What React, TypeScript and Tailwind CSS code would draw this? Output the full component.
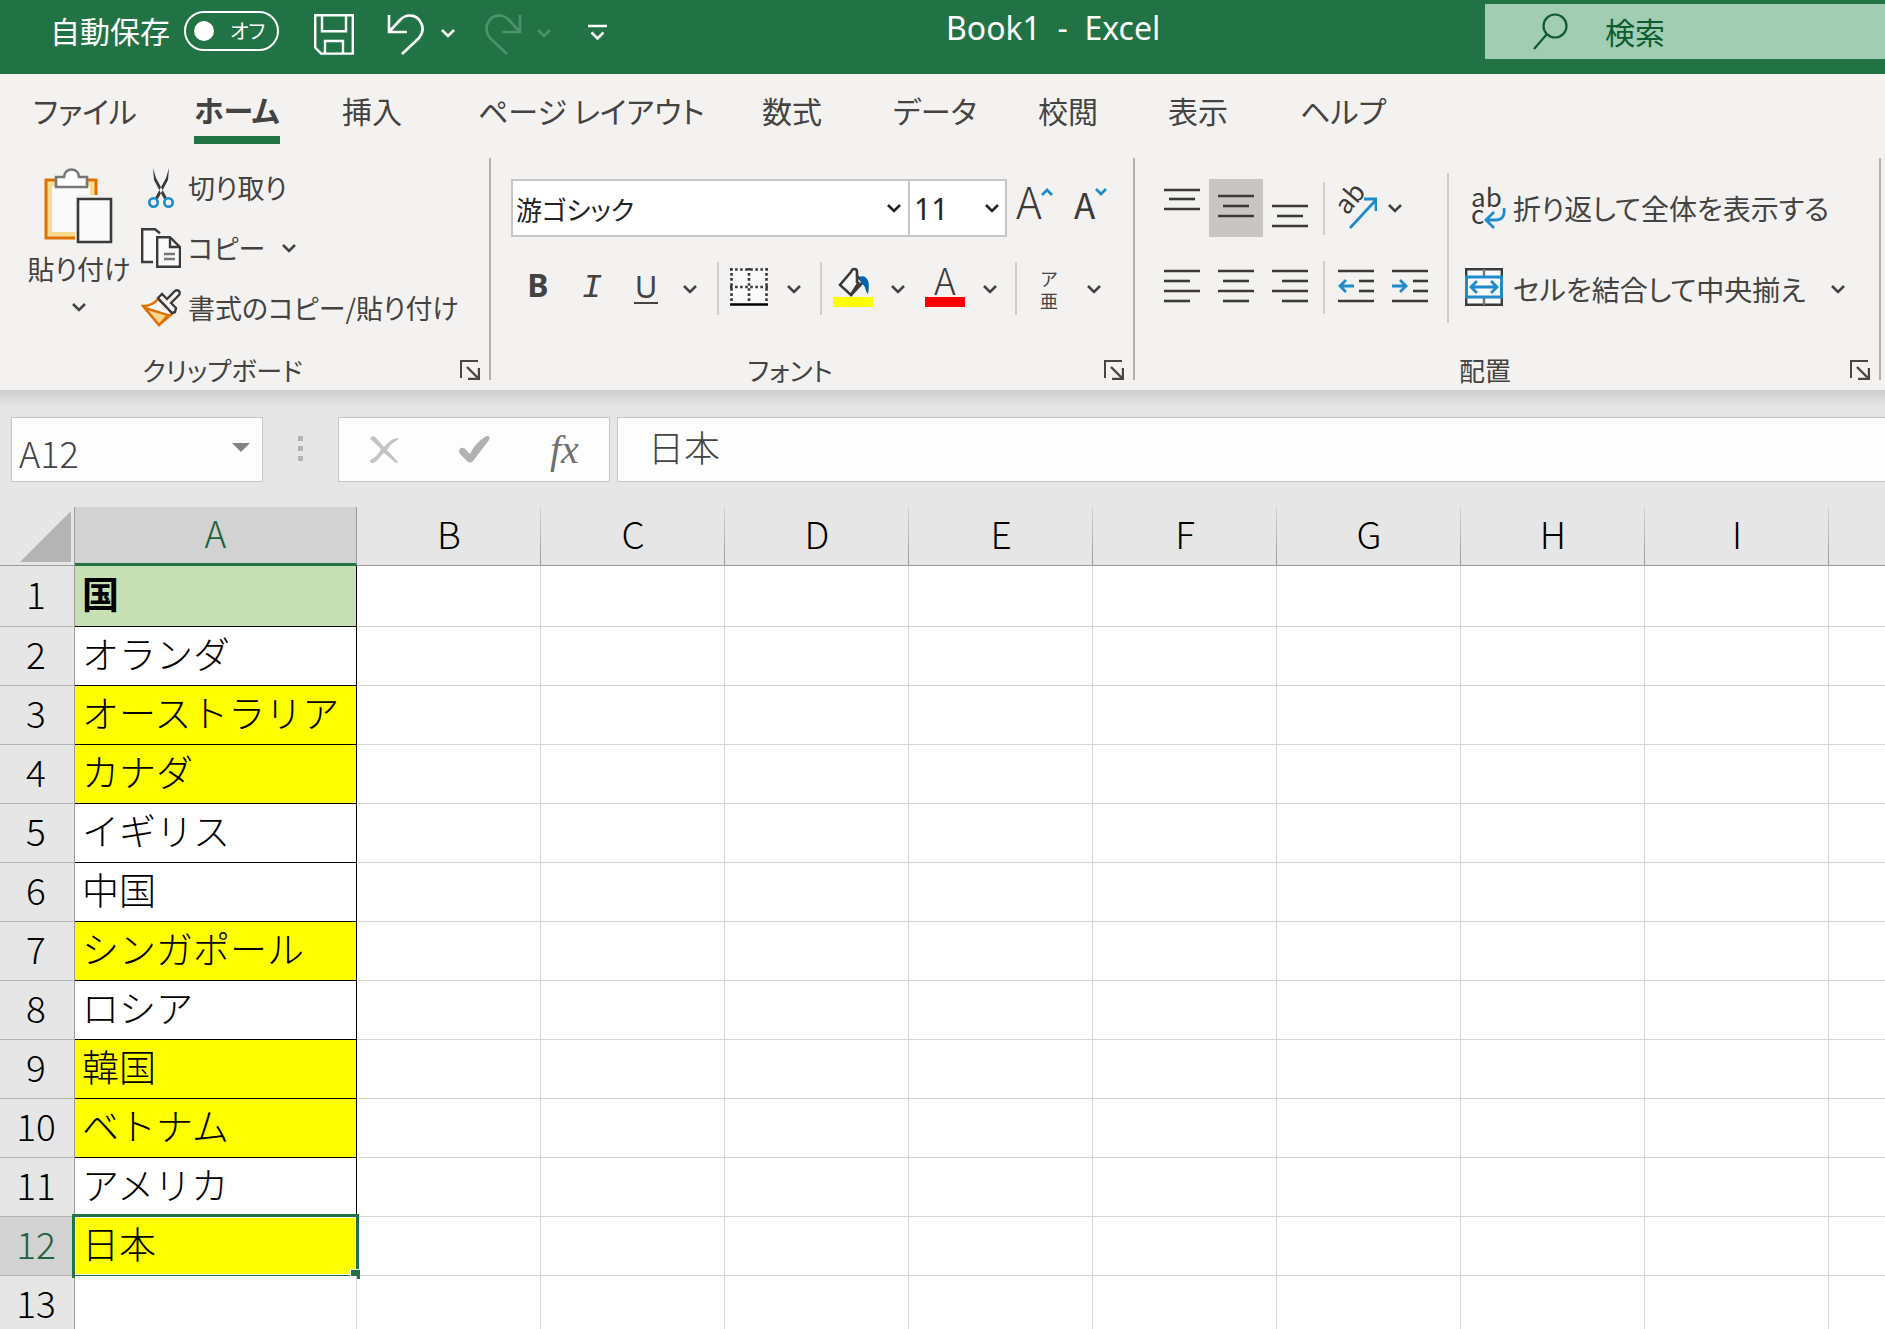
import type { ReactNode } from "react";
import clsx from "clsx";

const tabs = [
  { name: "ファイル", width: "w-[161px]" },
  { name: "ホーム", width: "w-[148px]", active: true },
  { name: "挿入", width: "w-[136px]" },
  { name: "ページ レイアウト", width: "w-[284px]" },
  { name: "数式", width: "w-[131px]" },
  { name: "データ", width: "w-[145px]" },
  { name: "校閲", width: "w-[130px]" },
  { name: "表示", width: "w-[132px]" },
  { name: "ヘルプ", width: "w-[100px]" },
];

const columns = ["A", "B", "C", "D", "E", "F", "G", "H", "I", ""];

const rows = [
  { value: "国", fill: "bg-[#c6e0b4] font-bold" },
  { value: "オランダ", fill: "bg-white" },
  { value: "オーストラリア", fill: "bg-[#ffff00]" },
  { value: "カナダ", fill: "bg-[#ffff00]" },
  { value: "イギリス", fill: "bg-white" },
  { value: "中国", fill: "bg-white" },
  { value: "シンガポール", fill: "bg-[#ffff00]" },
  { value: "ロシア", fill: "bg-white" },
  { value: "韓国", fill: "bg-[#ffff00]" },
  { value: "ベトナム", fill: "bg-[#ffff00]" },
  { value: "アメリカ", fill: "bg-white" },
  { value: "日本", fill: "bg-[#ffff00]", selected: true },
  { value: "", fill: "bg-white" },
];

function Chevron({ className }: { className?: string }) {
  return (
    <svg width="16" height="10" viewBox="0 0 16 10" className={clsx("shrink-0", className)}>
      <path d="M2 2l6 6 6-6" fill="none" stroke="currentColor" strokeWidth="2.6" />
    </svg>
  );
}

function Separator() {
  return <div className="h-[53px] w-[2px] shrink-0 bg-[#d0cecc]" />;
}

// Horizontal bars given as [x1, x2, y]
function Bars({ bars, children }: { bars: number[][]; children?: ReactNode }) {
  return (
    <svg width="36" height="40" viewBox="0 0 36 40">
      {bars.map(([x1, x2, y]) => (
        <path key={y} d={`M${x1} ${y}H${x2}`} stroke="#3b3a39" strokeWidth="2.6" />
      ))}
      {children}
    </svg>
  );
}

function Group({
  label,
  className,
  children,
}: {
  label: string;
  className: string;
  children: ReactNode;
}) {
  return (
    <section className={clsx("flex h-[222px] flex-col border-r-2 border-[#b3b0ad]", className)}>
      <div className="flex flex-1">{children}</div>
      <div className="flex h-5 items-center">
        <span className="flex-1 text-center text-[26px] leading-5">{label}</span>
        <button aria-label={label + "の設定"} className="mr-[9px] ml-[15px]">
          <svg width="20" height="20" viewBox="0 0 20 20" fill="none" stroke="#484644" strokeWidth="2">
            <path d="M1 18V1h17" />
            <path d="M7 7l11 11" strokeWidth="2.4" />
            <path d="M19 8v11H8" strokeWidth="2.4" />
          </svg>
        </button>
      </div>
    </section>
  );
}

function TitleBar() {
  return (
    <header className="flex h-[74px] shrink-0 items-start bg-[#217346] text-white">
      <div className="flex h-[61px] flex-1 items-center pl-[50px]">
        <span className="w-[134px] text-[30px]">自動保存</span>
        <button
          role="switch"
          aria-checked="false"
          aria-label="自動保存"
          className="flex h-10 w-[95px] items-center rounded-full border-2 border-white pl-2"
        >
          <span className="h-5 w-5 rounded-full bg-white" />
          <span className="pl-4 text-[20px]">オフ</span>
        </button>
        <button aria-label="上書き保存" className="mt-2 ml-[35px]">
          <svg width="40" height="41" viewBox="0 0 40 41" fill="none" stroke="white" strokeWidth="2.4">
            <path d="M1.2 1.2h37.6v38.4H7l-5.8-6z" />
            <path d="M8 1.2v16h24v-16M11 39.5V27h18v12.5" />
          </svg>
        </button>
        <button aria-label="元に戻す" className="mt-2 ml-[33px]">
          <svg width="38" height="42" viewBox="0 0 38 42" fill="none" stroke="white" strokeWidth="2.6">
            <path d="M2 1v17h18M2.5 17.5L13 6C20-1 29 1 33 7c4 6 3 12-1 17L15 40" />
          </svg>
        </button>
        <button aria-label="元に戻す一覧" className="mt-1 ml-[15px]">
          <Chevron />
        </button>
        <button aria-label="やり直し" className="mt-2 ml-7 text-[#4d9269]">
          <svg width="38" height="42" viewBox="0 0 38 42" fill="none" stroke="currentColor" strokeWidth="2.6">
            <path d="M36 1v17H18M35.500 17.500L25 6C18-1 9 1 5 7c-4 6-3 12 1 17l17 16" />
          </svg>
        </button>
        <button aria-label="やり直し一覧" className="mt-1 ml-[14px] text-[#4d9269]">
          <Chevron />
        </button>
        <button aria-label="クイック アクセス" className="mt-1 ml-9">
          <svg width="19" height="18" viewBox="0 0 19 18" fill="none" stroke="white" strokeWidth="2.6">
            <path d="M0 2h19M3.500 8.500l6 6 6-6" />
          </svg>
        </button>
      </div>
      <h1 className="w-[539px] pt-[6px] font-['Noto_Sans',sans-serif] text-[32px] leading-[44px] whitespace-pre">
        Book1  -  Excel
      </h1>
      <label className="mt-1 flex h-[55px] w-[400px] items-center bg-[#a0cdb4] pl-12 text-[#0e5c2f]">
        <svg width="36" height="38" viewBox="0 0 36 38" fill="none" stroke="currentColor" strokeWidth="2.2">
          <circle cx="22" cy="13" r="11.5" />
          <path d="M14 21L1 36" />
        </svg>
        <input
          type="search"
          aria-label="検索"
          placeholder="検索"
          className="ml-9 w-60 bg-transparent text-[30px] outline-none placeholder:text-[#0e5c2f]"
        />
      </label>
    </header>
  );
}

function Tabs() {
  return (
    <nav className="flex h-[84px] shrink-0 pl-[33px] text-[30px]">
      {tabs.map((tab) => (
        <div key={tab.name} className={clsx("shrink-0", tab.width)}>
          <button
            className={clsx(
              "h-[70px] whitespace-nowrap",
              tab.active ? "border-b-8 border-[#217346] pt-2 font-bold" : "pt-[2px]",
            )}
          >
            {tab.name}
          </button>
        </div>
      ))}
    </nav>
  );
}

function ClipboardGroup() {
  return (
    <Group label="クリップボード" className="w-[491px] shrink-0">
      <button className="flex w-[141px] flex-col items-center pt-[10px] pl-[17px]">
        <svg width="70" height="76" viewBox="0 0 70 76" className="shrink-0">
          <path d="M2 12h50v58H2z" fill="#f9db8f" stroke="#e07000" strokeWidth="3" />
          <path d="M8 18h38v46H8z" fill="#fafafa" />
          <path d="M31 27h39v49H31z" fill="#f3f2f1" />
          <path d="M12 9h8c0-10 15-10 15 0h8v10H12z" fill="#fff" stroke="#797775" strokeWidth="2.6" />
          <path d="M34 31h33v43H34z" fill="#fafafa" stroke="#3b3a39" strokeWidth="2.6" />
        </svg>
        <span className="mt-1 text-[27px] leading-[42px] whitespace-nowrap">貼り付け</span>
        <Chevron className="mt-3" />
      </button>
      <div className="flex flex-col text-[27px]">
        <button className="flex h-[60px] items-center">
          <span className="w-[47px] pl-[7px]">
            <svg width="26" height="40" viewBox="0 0 26 40" fill="none">
              <path d="M5 0l3 10 11 20-3 1L6 12zM21 0l-3 10L7 30l3 1 10-19z" fill="#3b3a39" />
              <circle cx="5.500" cy="34.500" r="4.2" stroke="#1e8bcd" strokeWidth="2.6" />
              <circle cx="20.500" cy="34.500" r="4.2" stroke="#1e8bcd" strokeWidth="2.6" />
            </svg>
          </span>
          切り取り
        </button>
        <div className="flex h-[60px] items-center">
          <button className="flex items-center">
            <span className="w-[47px]">
              <svg width="40" height="40" viewBox="0 0 40 40" stroke="#3b3a39" strokeWidth="2.4">
                <path d="M12 34H1.200V1.200H14l5 4" fill="#fafafa" />
                <path d="M16.200 9.200H29l10 10v19.600H16.200z" fill="#fafafa" />
                <path d="M29 9v10h10" fill="none" />
                <path d="M23 26h11M23 31h11" stroke="#797775" />
              </svg>
            </span>
            コピー
          </button>
          <button aria-label="コピーのオプション" className="ml-4">
            <Chevron />
          </button>
        </div>
        <button className="flex h-[60px] items-center whitespace-nowrap">
          <span className="w-[47px] shrink-0">
            <svg width="40" height="40" viewBox="0 0 40 40" strokeWidth="2.4">
              <path d="M2 18c6 0 11-2 15-7l15 14-14 12z" fill="#fafafa" stroke="#e07000" />
              <path d="M4 20l23 7-9 10z" fill="#f9db8f" stroke="#e07000" />
              <path d="M17 10l4-4 5 5 8-8c3-2 6 1 4 4l-8 8 5 5-1 4-3 1z" fill="#fff" stroke="#3b3a39" />
            </svg>
          </span>
          書式のコピー/貼り付け
        </button>
      </div>
    </Group>
  );
}

function FontGroup() {
  return (
    <Group label="フォント" className="w-[644px] shrink-0">
      <div className="flex flex-col gap-[25px] pt-[21px] pl-5">
        <div className="flex h-[58px]">
          <label className="grid w-[399px] items-center text-[#222]">
            <select
              aria-label="フォント名"
              className="col-start-1 row-start-1 h-[58px] appearance-none border-2 border-[#c8c6c4] bg-white pl-[3px] text-[26px]"
            >
              <option>游ゴシック</option>
            </select>
            <Chevron className="pointer-events-none col-start-1 row-start-1 mr-2 justify-self-end" />
          </label>
          <label className="-ml-[2px] grid w-[99px] items-center text-[#222]">
            <select
              aria-label="フォント サイズ"
              className="col-start-1 row-start-1 h-[58px] appearance-none border-2 border-[#c8c6c4] bg-white pl-1 font-['Noto_Sans',sans-serif] text-[30px]"
            >
              <option>11</option>
            </select>
            <Chevron className="pointer-events-none col-start-1 row-start-1 mr-[7px] justify-self-end" />
          </label>
          <button aria-label="フォント サイズの拡大" className="ml-2 self-start">
            <svg width="40" height="44" viewBox="0 0 40 44">
              <text x="1" y="40" fontSize="44" fill="#3b3a39" className="font-light">A</text>
              <path d="M27 16l5-5 5 5" fill="none" stroke="#1e8bcd" strokeWidth="2.8" />
            </svg>
          </button>
          <button aria-label="フォント サイズの縮小" className="ml-[17px] self-start">
            <svg width="38" height="44" viewBox="0 0 38 44">
              <text x="2" y="40" fontSize="35" fill="#3b3a39">A</text>
              <path d="M24 10l5 5 5-5" fill="none" stroke="#1e8bcd" strokeWidth="2.8" />
            </svg>
          </button>
        </div>
        <div className="flex h-[53px] items-center">
          <button className="w-[54px] pb-2 font-['Noto_Sans',sans-serif] text-[32px] leading-10 font-bold">B</button>
          <button className="w-[54px] pb-[2px] font-['Liberation_Mono',monospace] text-[34px] leading-10 italic">I</button>
          <button className="w-[54px] pb-1">
            <span className="inline-block w-6 border-b-2 border-current font-['Noto_Sans',sans-serif] text-[31px] leading-8">U</span>
          </button>
          <button aria-label="下線の種類" className="mr-[19px] ml-[9px]">
            <Chevron />
          </button>
          <Separator />
          <button aria-label="罫線" className="mb-1 ml-[11px]">
            <svg width="38" height="38" viewBox="0 0 38 38" fill="none">
              <path d="M1 1h36v34H1z" fill="#fafafa" />
              <path d="M0 1.500h38M0 19h38M1.500 0v34M19 0v34M36.500 0v34" stroke="#3b3a39" strokeWidth="2.6" strokeDasharray="2.6 2.46" />
              <path d="M0 36.500h38" stroke="#000" strokeWidth="2.6" />
            </svg>
          </button>
          <button aria-label="罫線の種類" className="mr-[18px] ml-[18px]">
            <Chevron />
          </button>
          <Separator />
          <button aria-label="塗りつぶしの色" className="mb-1 ml-[11px]">
            <svg width="40" height="40" viewBox="0 0 40 40" fill="none">
              <path d="M26 15L18 28 7 18 18 5c1-4 6-4 6 0v11" fill="#fafafa" stroke="#3b3a39" strokeWidth="2.6" />
              <path d="M18 28l12-13-6-6" stroke="#3b3a39" strokeWidth="2.6" />
              <path d="M26 10c7-3 12 3 9 17-3-3-2-8-6-10z" fill="#0063b1" />
              <path d="M0 30h40v10H0z" fill="#ff0" />
            </svg>
          </button>
          <button aria-label="塗りつぶしの一覧" className="ml-[17px]">
            <Chevron />
          </button>
          <button aria-label="フォントの色" className="mb-1 ml-[19px]">
            <svg width="40" height="40" viewBox="0 0 40 40">
              <text x="20" y="28" fontSize="37" textAnchor="middle" fill="#3b3a39" className="font-light">A</text>
              <path d="M0 30h40v10H0z" fill="#f00" />
            </svg>
          </button>
          <button aria-label="フォントの色一覧" className="mr-[17px] ml-[17px]">
            <Chevron />
          </button>
          <Separator />
          <button className="ml-5 flex w-6 flex-col items-center text-[18px] leading-[22px]">
            <span className="block h-[22px]">ア</span>
            <span className="block h-[22px]">亜</span>
          </button>
          <button aria-label="ふりがなの種類" className="ml-[25px]">
            <Chevron />
          </button>
        </div>
      </div>
    </Group>
  );
}

function AlignmentGroup() {
  const cell = "flex h-[58px] w-[54px] items-center justify-center";
  return (
    <Group label="配置" className="mr-1 flex-1">
      <div className="mt-[15px] flex h-[150px] w-[314px] shrink-0 flex-col gap-[25px] border-r-2 border-[#d0cecc] pt-[6px] pl-5">
        <div className="flex h-[58px] items-center">
          <button aria-label="上揃え" className={cell}>
            <Bars bars={[[0, 36, 2], [5, 31, 11], [0, 36, 21]]} />
          </button>
          <button aria-label="上下中央揃え" className={clsx(cell, "bg-[#c8c6c4]")}>
            <Bars bars={[[0, 36, 8], [5, 31, 18], [0, 36, 28]]} />
          </button>
          <button aria-label="下揃え" className={cell}>
            <Bars bars={[[0, 36, 18], [5, 31, 28], [0, 36, 38]]} />
          </button>
          <div className="mr-2 ml-[6px]">
            <Separator />
          </div>
          <button aria-label="方向">
            <svg width="44" height="44" viewBox="0 0 44 44" fill="none">
              <text x="0" y="0" fontSize="26" fill="#3b3a39" transform="translate(14 30) rotate(-50)">ab</text>
              <path d="M17 42L42 15M31 13h12v12" stroke="#1e8bcd" strokeWidth="2.8" />
            </svg>
          </button>
          <button aria-label="方向の種類" className="ml-[10px]">
            <Chevron />
          </button>
        </div>
        <div className="flex h-[53px] items-center pb-[2px]">
          <button aria-label="左揃え" className={cell}>
            <Bars bars={[[0, 36, 3], [0, 26, 13], [0, 36, 23], [0, 26, 33]]} />
          </button>
          <button aria-label="中央揃え" className={cell}>
            <Bars bars={[[0, 36, 3], [5, 31, 13], [0, 36, 23], [5, 31, 33]]} />
          </button>
          <button aria-label="右揃え" className={cell}>
            <Bars bars={[[0, 36, 3], [10, 36, 13], [0, 36, 23], [10, 36, 33]]} />
          </button>
          <div className="mr-1 ml-[6px]">
            <Separator />
          </div>
          <button aria-label="インデントを減らす" className={cell}>
            <Bars bars={[[0, 36, 3], [21, 36, 13], [21, 36, 23], [0, 36, 33]]}>
              <path d="M16 18H2M8 12l-6 6 6 6" fill="none" stroke="#1e8bcd" strokeWidth="2.8" />
            </Bars>
          </button>
          <button aria-label="インデントを増やす" className={cell}>
            <Bars bars={[[0, 36, 3], [21, 36, 13], [21, 36, 23], [0, 36, 33]]}>
              <path d="M0 18h14M8 12l6 6-6 6" fill="none" stroke="#1e8bcd" strokeWidth="2.8" />
            </Bars>
          </button>
        </div>
      </div>
      <div className="flex flex-col gap-[25px] pt-[21px] pl-4 text-[28px] whitespace-nowrap">
        <button className="flex h-[58px] items-center">
          <span className="w-12 pl-[6px]">
            <svg width="36" height="44" viewBox="0 0 36 44" fill="none">
              <text x="0" y="21" fontSize="26" fill="#3b3a39">ab</text>
              <text x="0" y="38" fontSize="26" fill="#3b3a39">c</text>
              <path d="M33 22c1 8-2 12-8 12H16M23 26l-8 8 8 8" stroke="#1e8bcd" strokeWidth="2.8" />
            </svg>
          </span>
          折り返して全体を表示する
        </button>
        <div className="flex h-[53px] items-center">
          <button className="flex items-center">
            <span className="w-12">
              <svg width="38" height="38" viewBox="0 0 38 38" fill="none" strokeWidth="2.4" className="mb-1">
                <path d="M1.200 1.200h35.600v35.600H1.200z" fill="#fafafa" stroke="#3b3a39" />
                <path d="M19 1v8M19 29v8" stroke="#797775" />
                <path d="M1.500 9h35v20h-35z" fill="#fafafa" stroke="#1e8bcd" strokeWidth="3" />
                <path d="M6 19h26M12 13l-6 6 6 6M26 13l6 6-6 6" stroke="#1e8bcd" strokeWidth="2.8" />
              </svg>
            </span>
            セルを結合して中央揃え
          </button>
          <button aria-label="セル結合の種類" className="ml-6">
            <Chevron />
          </button>
        </div>
      </div>
    </Group>
  );
}

function FormulaBar() {
  return (
    <div className="flex h-[117px] shrink-0 items-start bg-[linear-gradient(#cdcdcd,#e6e6e6_16px)] pt-[27px] pl-[11px] text-[36px] text-[#444]">
      <div className="flex h-[65px] w-[252px] shrink-0 items-center border border-[#c6c6c6] bg-[#fdfdfd] pr-3 pl-[7px]">
        <input
          aria-label="名前ボックス"
          defaultValue="A12"
          className="w-full min-w-0 bg-transparent pt-1 font-light outline-none"
        />
        <button aria-label="名前の一覧">
          <svg width="18" height="9" viewBox="0 0 18 9" className="mb-1">
            <path d="M0 0h18L9 9z" fill="#808487" />
          </svg>
        </button>
      </div>
      <div className="flex h-[62px] w-[75px] shrink-0 flex-col items-center justify-center gap-[5px]">
        <span className="h-[5px] w-[5px] bg-[#b4b4b4]" />
        <span className="h-[5px] w-[5px] bg-[#b4b4b4]" />
        <span className="h-[5px] w-[5px] bg-[#b4b4b4]" />
      </div>
      <div className="flex h-[65px] w-[272px] shrink-0 items-center border border-[#c6c6c6] bg-[#fdfdfd] pl-[31px]">
        <button aria-label="キャンセル">
          <svg width="29" height="27" viewBox="0 0 29 27" fill="#c4c4c4">
            <path d="M0 3c2-4 5-3 7 0l7 8C18 6 23 2 28 2c1 1 0 2-2 3-4 2-7 5-9 9l11 12-2 1-12-10C9 21 7 27 2 27c-3-1-2-3 0-4 4-2 7-6 9-10C7 9 4 6 0 3z" />
          </svg>
        </button>
        <button aria-label="入力" className="ml-[60px]">
          <svg width="31" height="27" viewBox="0 0 31 27" fill="#b1b1b1">
            <path d="M0 15c1-4 5-4 7-1l4 4C15 10 21 3 28 0c3 0 3 2 2 4L14 25c-2 2-4 2-6 0L1 18z" />
          </svg>
        </button>
        <button className="ml-[60px] font-['Liberation_Serif',serif] text-[40px] leading-10 text-[#707070] italic">
          fx
        </button>
      </div>
      <input
        aria-label="数式バー"
        defaultValue="日本"
        className="ml-[7px] h-[65px] min-w-0 flex-1 border border-r-0 border-[#c6c6c6] bg-[#fdfdfd] pb-2 pl-[30px] font-light outline-none"
      />
    </div>
  );
}

function Sheet() {
  return (
    <table className="w-full table-fixed border-separate border-spacing-0 bg-white text-[37px] leading-[44px] font-light text-black [font-feature-settings:normal]">
      <colgroup>
        <col className="w-[75px]" />
        <col className="w-[282px]" />
        {columns.slice(1, -1).map((name) => (
          <col key={name} className="w-[184px]" />
        ))}
        <col />
      </colgroup>
      <thead>
        <tr className="h-[59px]">
          <td className="border-r border-b border-[#9b9b9b] bg-[#e6e6e6] p-0">
            <svg width="51" height="51" viewBox="0 0 51 51" className="ml-5">
              <path d="M51 0v51H0z" fill="#b4b4b4" />
            </svg>
          </td>
          {columns.map((name) => (
            <th
              key={name}
              scope="col"
              className={clsx(
                "p-0 pb-[6px] font-light",
                name === "A" &&
                  "border-r border-b-3 border-r-[#9b9b9b] border-b-[#217346] bg-[#d2d2d2] text-[#1e6040]",
                name !== "A" && "border-b border-[#9b9b9b] bg-[#e6e6e6]",
                name !== "A" &&
                  name !== "" &&
                  "bg-[linear-gradient(#d4d4d4,#9b9b9b)] bg-[length:1px_100%] bg-right bg-no-repeat",
              )}
            >
              {name}
            </th>
          ))}
        </tr>
      </thead>
      <tbody>
        {rows.map((row, i) => (
          <tr key={i} className={i === 0 ? "h-[61px]" : "h-[59px]"}>
            <th
              scope="row"
              className={clsx(
                "border-r border-b border-r-[#9b9b9b] border-b-[#b4b4b4] p-0 pr-[2px] pb-[6px] font-light",
                row.selected ? "bg-[#d2d2d2] text-[#1e6040]" : "bg-[#e6e6e6]",
              )}
            >
              {i + 1}
            </th>
            <td
              className={clsx(
                "relative border-r border-b p-0 pb-[6px] pl-[7px] whitespace-nowrap",
                row.fill,
                row.value ? "border-black" : "border-[#d4d4d4]",
              )}
            >
              {row.value}
              {row.selected && (
                <div className="absolute -inset-[3px] border-3 border-[#217346] shadow-[inset_0_0_0_1px_white]">
                  <div className="absolute -right-1 -bottom-1 h-[10px] w-[10px] border-t border-l border-white bg-[#217346]" />
                </div>
              )}
            </td>
            {columns.slice(1).map((name) => (
              <td key={name} className="border-r border-b border-[#d4d4d4] last:border-r-0" />
            ))}
          </tr>
        ))}
      </tbody>
    </table>
  );
}

export default function App() {
  return (
    <div className="flex h-screen flex-col overflow-hidden bg-[#f3f2f1] font-['Noto_Sans_CJK_JP',sans-serif] text-[#444341] [font-feature-settings:'palt']">
      <TitleBar />
      <Tabs />
      <div className="flex h-[232px] shrink-0">
        <ClipboardGroup />
        <FontGroup />
        <AlignmentGroup />
      </div>
      <FormulaBar />
      <Sheet />
    </div>
  );
}
